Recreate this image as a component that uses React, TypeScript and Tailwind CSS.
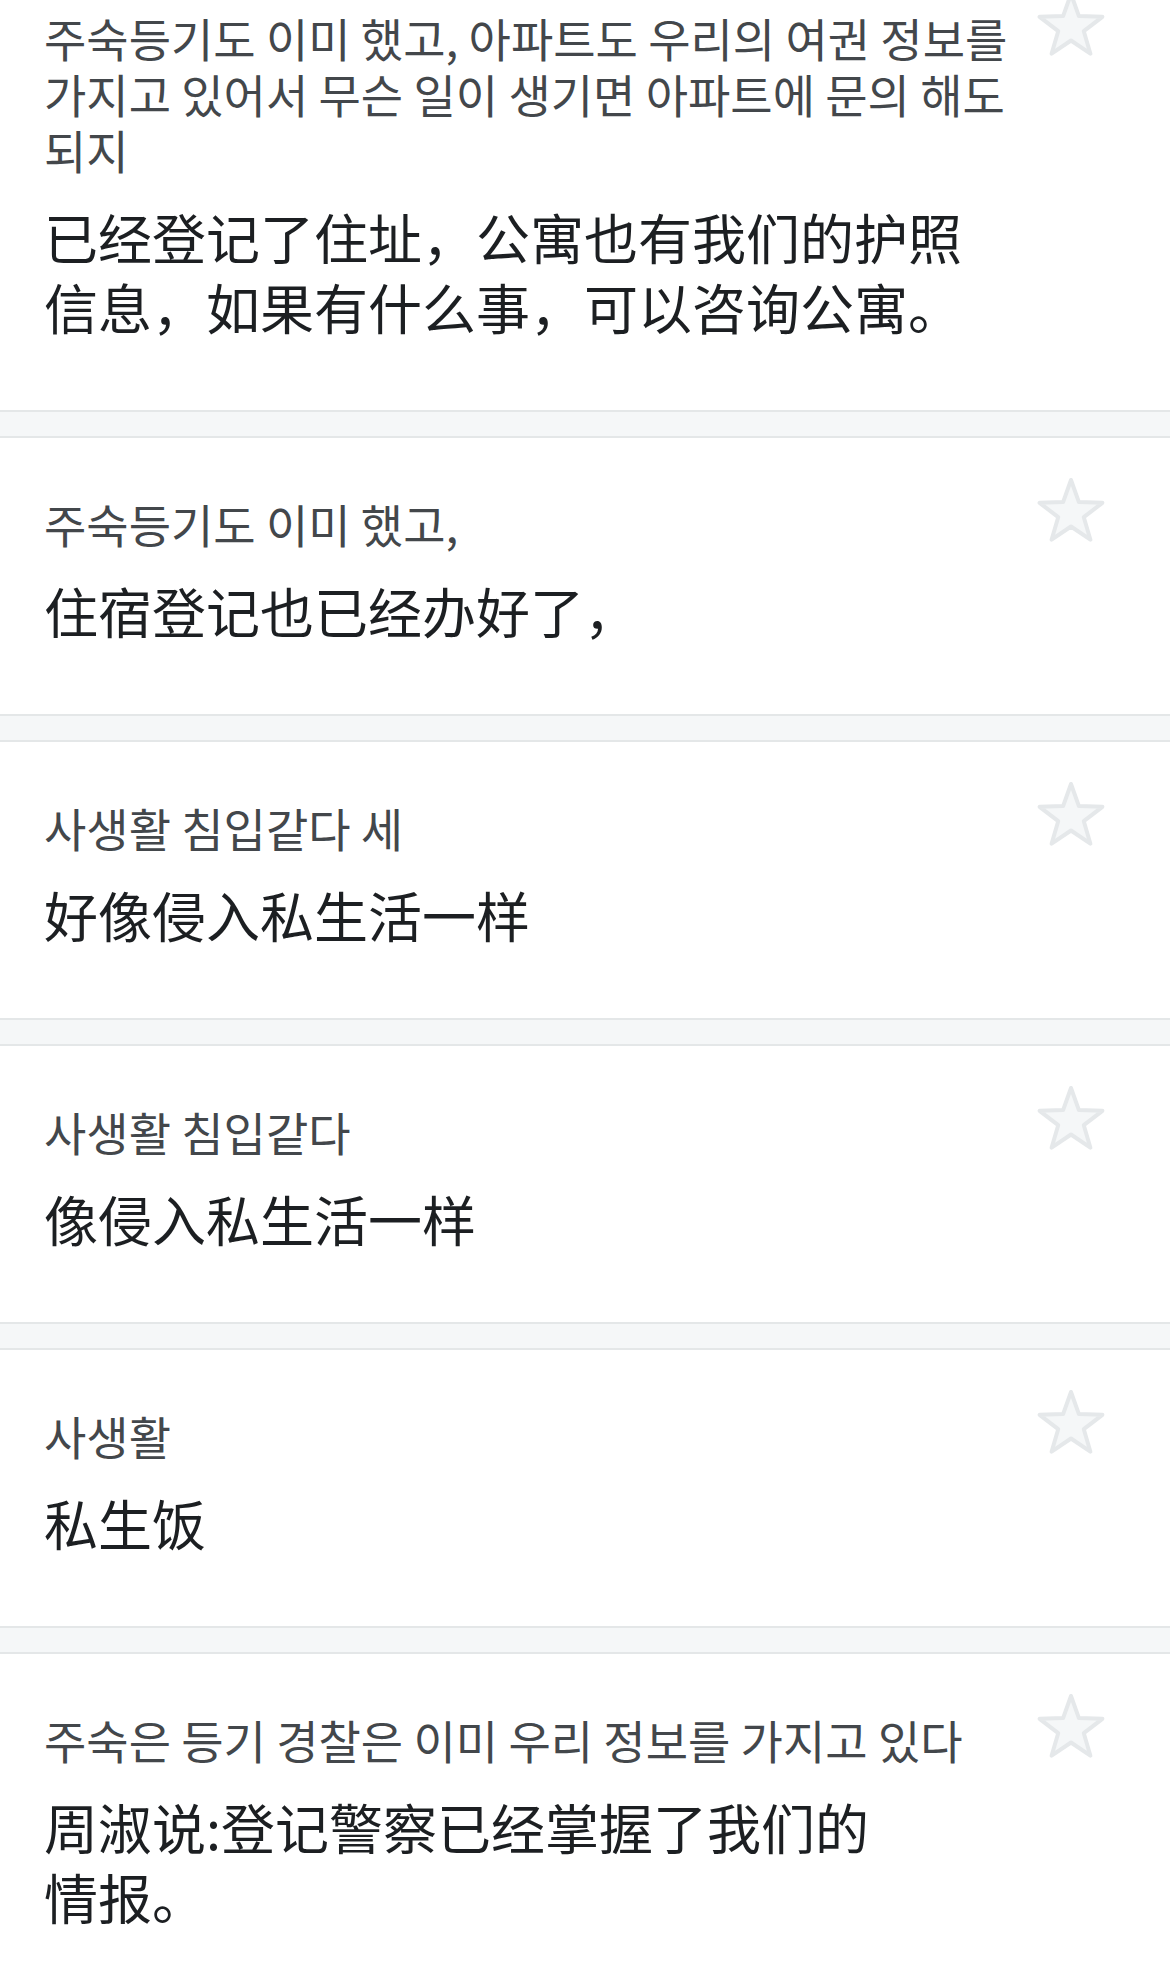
import React from "react";

type Item = { ko: string[]; zh: string[] };

const items: Item[] = [
  {
    ko: [
      "주숙등기도 이미 했고, 아파트도 우리의 여권 정보를",
      "가지고 있어서 무슨 일이 생기면 아파트에 문의 해도",
      "되지",
    ],
    zh: ["已经登记了住址，公寓也有我们的护照", "信息，如果有什么事，可以咨询公寓。"],
  },
  { ko: ["주숙등기도 이미 했고,"], zh: ["住宿登记也已经办好了，"] },
  { ko: ["사생활 침입같다 세"], zh: ["好像侵入私生活一样"] },
  { ko: ["사생활 침입같다"], zh: ["像侵入私生活一样"] },
  { ko: ["사생활"], zh: ["私生饭"] },
  {
    ko: ["주숙은 등기 경찰은 이미 우리 정보를 가지고 있다"],
    zh: ["周淑说:登记警察已经掌握了我们的", "情报。"],
  },
];

function Star() {
  return (
    <svg width="70" height="66" viewBox="0 0 70 66" className="shrink-0">
      <polygon
        points="35,3 42.9,25.1 66.4,25.8 47.8,40.2 54.4,62.7 35,49.5 15.6,62.7 22.2,40.2 3.6,25.8 27.1,25.1"
        fill="#f5f7f8"
        stroke="#e5e8ea"
        strokeWidth="4"
        strokeLinejoin="round"
      />
    </svg>
  );
}

function Card({ item }: { item: Item }) {
  return (
    <div className="flex items-start justify-between bg-white pl-[44px] pr-[64px] pt-[39px] pb-[68px]">
      <div className="flex-1 min-w-0">
        <div
          className="mt-[18px] text-[46px] leading-[56px] text-[#43474b]"
          style={{ fontFamily: '"Noto Sans CJK KR", "Noto Sans", sans-serif' }}
        >
          {item.ko.map((l, i) => (
            <div key={i} className="whitespace-nowrap">
              {l}
            </div>
          ))}
        </div>
        <div
          className="mt-[25px] text-[54px] leading-[70px] text-[#1c1f22]"
          style={{ fontFamily: '"Noto Sans CJK SC", "Noto Sans", sans-serif' }}
        >
          {item.zh.map((l, i) => (
            <div key={i} className="whitespace-nowrap">
              {l}
            </div>
          ))}
        </div>
      </div>
      <Star />
    </div>
  );
}

export default function App() {
  return (
    <div className="w-[1170px] h-[1962px] overflow-hidden bg-white">
      <div className="-mt-[48px]">
        {items.map((it, i) => (
          <React.Fragment key={i}>
            {i > 0 && (
              <div className="h-[28px] border-y-2 border-[#e4e7e8] bg-[#f5f7f8]" />
            )}
            <Card item={it} />
          </React.Fragment>
        ))}
      </div>
    </div>
  );
}
